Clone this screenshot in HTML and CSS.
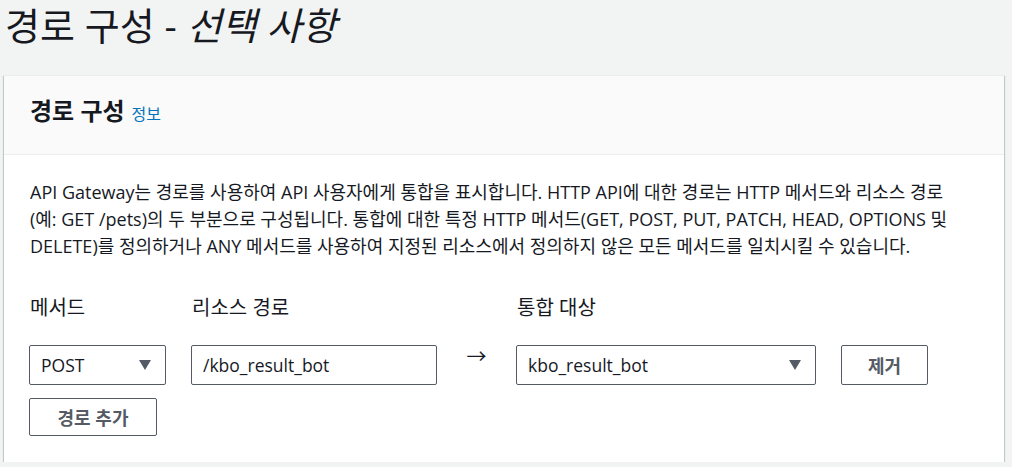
FILE: index.html
```html
<!DOCTYPE html>
<html lang="ko">
<head>
    <meta charset="UTF-8">
    <meta name="viewport" content="width=device-width, initial-scale=1.0">
    <title>경로 구성</title>
    <link rel="stylesheet" href="styles.css">
</head>
<body>

<h1 class="page-title">경로 구성 - <i>선택 사항</i></h1>

<div class="card">
    <div class="card-header">
        <h2>경로 구성</h2>
        <a class="info-link" href="#">정보</a>
    </div>
    <div class="card-body">
        <p class="desc">API Gateway는 경로를 사용하여 API 사용자에게 통합을 표시합니다. HTTP API에 대한 경로는 HTTP 메서드와 리소스 경로<br>
            (예: GET /pets)의 두 부분으로 구성됩니다. 통합에 대한 특정 HTTP 메서드(GET, POST, PUT, PATCH, HEAD, OPTIONS 및<br>
            DELETE)를 정의하거나 ANY 메서드를 사용하여 지정된 리소스에서 정의하지 않은 모든 메서드를 일치시킬 수 있습니다.</p>

        <div class="route-grid">
            <div class="label">메서드</div>
            <div class="label spaced">리소스 경로</div>
            <div class="label"></div>
            <div class="label">통합 대상</div>
            <div class="label spaced"></div>

            <div class="select">
                <span>POST</span>
                <span class="caret"></span>
            </div>
            <div class="input spaced">/kbo_result_bot</div>
            <div class="arrow">&rarr;</div>
            <div class="select">
                <span>kbo_result_bot</span>
                <span class="caret"></span>
            </div>
            <button class="btn spaced">제거</button>
        </div>

        <button class="btn btn-add">경로 추가</button>
    </div>
</div>

</body>
</html>
```

FILE: styles.css
```css
body {
    margin: 0;
    background: #f2f3f3;
    color: #16191f;
    font-family: "Open Sans", "Noto Sans CJK KR", sans-serif;
    overflow: hidden;
}
.page-title {
    margin: 0;
    padding: 2px 0 0 5px;
    font-size: 38px;
    font-weight: 400;
    line-height: 46px;
}
.page-title i {
    font-style: italic;
}
.card {
    margin: 27px 8px 0 4px;
    background: #fff;
    border-top: 1px solid #eaeded;
    box-shadow: 0 1px 1px 0 rgba(0, 28, 36, 0.3), 1px 1px 1px 0 rgba(0, 28, 36, 0.15), -1px 1px 1px 0 rgba(0, 28, 36, 0.15);
}
.card-header {
    display: flex;
    align-items: baseline;
    gap: 7px;
    padding: 18px 26px 26px;
    background: #fafafa;
    border-bottom: 1px solid #eaeded;
}
.card-header h2 {
    margin: 0;
    font-size: 24px;
    font-weight: 700;
    line-height: 34px;
}
.info-link {
    color: #0073bb;
    font-size: 16px;
    text-decoration: none;
}
.card-body {
    padding: 24px 25px 26px;
}
.desc {
    margin: 0 0 0 1px;
    font-size: 18px;
    line-height: 27px;
    white-space: nowrap;
}
.route-grid {
    display: grid;
    grid-template-columns: 137px 271px 79px 300px 112px;
    margin-top: 34px;
}
.spaced {
    margin-left: 25px;
}
.label {
    margin-bottom: 23px;
    padding-left: 1px;
    font-size: 20px;
    line-height: 28px;
}
.select, .input {
    display: flex;
    align-items: center;
    justify-content: space-between;
    box-sizing: border-box;
    height: 40px;
    padding: 0 14px 0 11px;
    border: 1px solid #545b64;
    border-radius: 2px;
    background: #fff;
    font-size: 17.5px;
}
.caret {
    width: 0;
    height: 0;
    border-left: 6px solid transparent;
    border-right: 6px solid transparent;
    border-top: 10px solid #545b64;
}
.arrow {
    padding-top: 2px;
    text-align: center;
    font-size: 20px;
    line-height: 20px;
}
.btn {
    box-sizing: border-box;
    height: 40px;
    border: 1px solid #545b64;
    border-radius: 2px;
    background: #fff;
    color: #545b64;
    font-family: inherit;
    font-size: 18px;
    font-weight: 700;
    cursor: pointer;
}
.btn-add {
    display: block;
    width: 128px;
    height: 38px;
    margin-top: 13px;
}
```
